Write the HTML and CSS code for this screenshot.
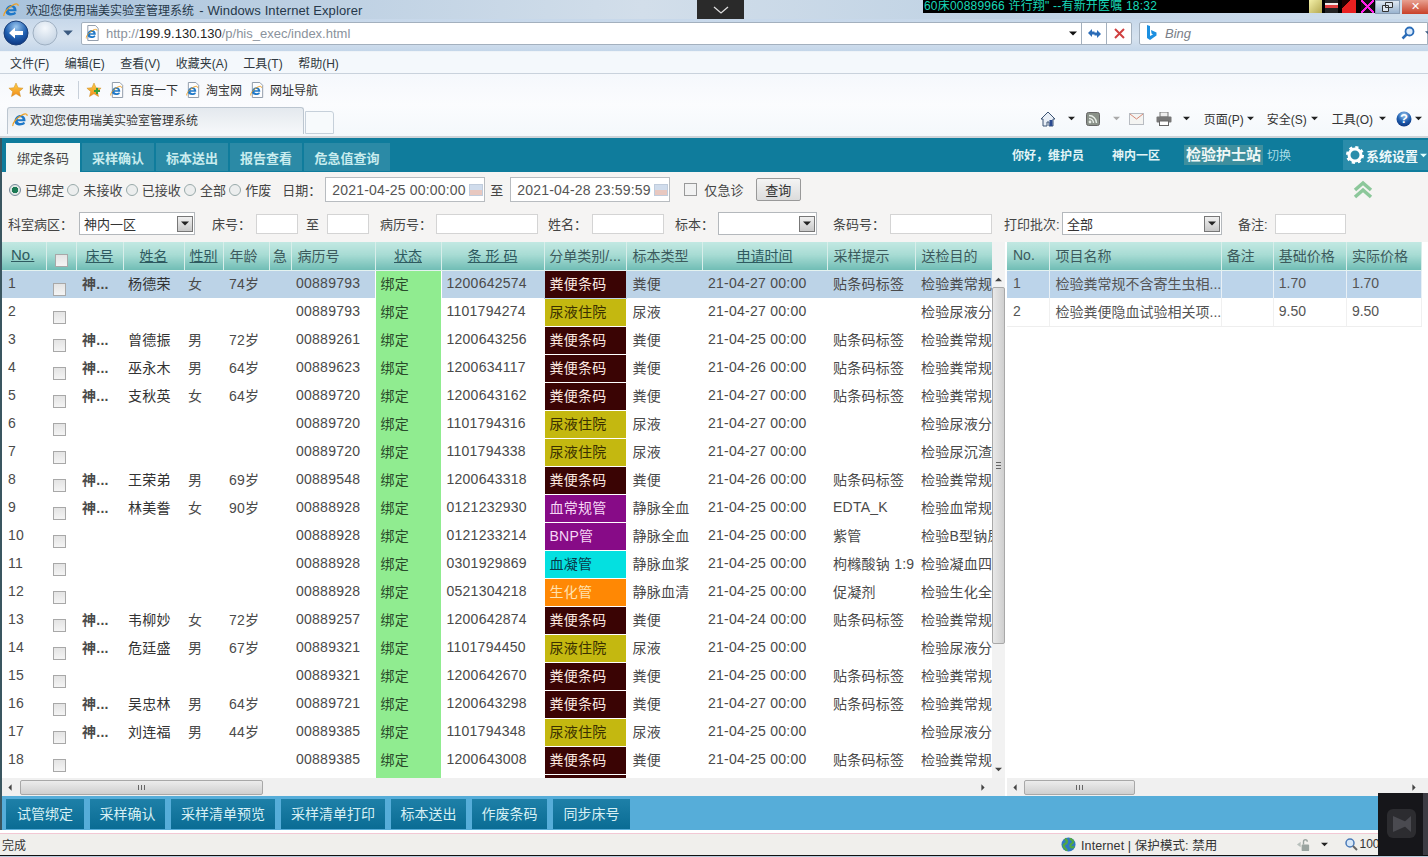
FILE: index.html
```html
<!DOCTYPE html>
<html lang="zh-CN">
<head>
<meta charset="utf-8">
<title>欢迎您使用瑞美实验室管理系统</title>
<link rel="stylesheet" href="styles.css">
</head>
<body>
<svg class="defs" width="0" height="0" aria-hidden="true">
  <defs>
    <linearGradient id="orange" x1="0" y1="0" x2="0" y2="1"><stop offset="0" stop-color="#ffd24a"/><stop offset="1" stop-color="#f08a18"/></linearGradient>
    <radialGradient id="blueball" cx=".5" cy=".25" r=".8"><stop offset="0" stop-color="#9cc8f0"/><stop offset=".55" stop-color="#1f5fb0"/><stop offset="1" stop-color="#0b2f78"/></radialGradient>
    <radialGradient id="paleball" cx=".5" cy=".3" r=".8"><stop offset="0" stop-color="#f4f8fc"/><stop offset="1" stop-color="#bccddf"/></radialGradient>
    <symbol id="ie" viewBox="0 0 16 16">
      <path d="M2.500 9.500c0-4 3-6.500 6-6.500s5.200 2.300 5 6.200H5.800c.2 2 3.800 2.600 6.200.6l1 2c-3 2.600-10.500 2.300-10.500-2.300zM5.800 7.200h4.700c-.2-2.500-4.300-2.500-4.700 0z" fill="#1f78c8"/>
      <path d="M1 14c-1-2 3-8 9-11 3-1.500 5.500-1.500 5 .8" fill="none" stroke="#f0a020" stroke-width="1.200"/>
    </symbol>
    <symbol id="page" viewBox="0 0 16 17">
      <path d="M2.500.5h8l3 3v13h-11z" fill="#fdfdfe" stroke="#8c98a6"/>
      <use href="#ie" x="0" y="3" width="13" height="13"/>
    </symbol>
    <symbol id="star" viewBox="0 0 16 16">
      <path d="M8 1l2.100 4.700 5 .5-3.800 3.300 1.200 5L8 11.800 3.500 14.500l1.200-5L.9 6.200l5-.5z" fill="url(#orange)" stroke="#c98a20" stroke-width=".5"/>
    </symbol>
    <symbol id="caret" viewBox="0 0 8 5"><path d="M0 .5h8L4 4.500z" fill="currentColor"/></symbol>
  </defs>
</svg>

<div class="window">
  <div class="titlebar">
    <svg class="ico16"><use href="#ie"/></svg>
    <span class="title-text">欢迎您使用瑞美实验室管理系统 <span class="title-latin">- Windows Internet Explorer</span></span>
  </div>

  <div class="addressrow">
    <svg class="nav-btn back" viewBox="0 0 26 26">
      <circle cx="13" cy="13" r="12" fill="url(#blueball)" stroke="#1b3f78"/>
      <path d="M6 13l6-5.500V11h8v4h-8v3.500z" fill="#fff"/>
    </svg>
    <svg class="nav-btn fwd" viewBox="0 0 26 26">
      <circle cx="13" cy="13" r="12" fill="url(#paleball)" stroke="#9fb0c2"/>
    </svg>
    <svg class="nav-caret"><use href="#caret"/></svg>
    <div class="addressbox">
      <svg class="ico16"><use href="#page"/></svg>
      <span class="url">http://<b>199.9.130.130</b>/p/his_exec/index.html</span>
      <svg class="box-caret"><use href="#caret"/></svg>
      <span class="box-btn">
        <svg width="15" height="13" viewBox="0 0 15 13"><path d="M1 6l4-4v2.500h2.500v3H5V10zM14 7l-4 4V8.500H7.500v-3H10V3z" fill="#2a6cb8"/></svg>
      </span>
      <span class="box-btn">
        <svg width="11" height="11" viewBox="0 0 11 11"><path d="M1 1l9 9M10 1l-9 9" stroke="#d04040" stroke-width="2"/></svg>
      </span>
    </div>
    <div class="searchbox">
      <svg class="bing" viewBox="0 0 11 16"><path d="M1 0l3 1v10l3-1.500-1.500-1L5 5l5.500 2.500v3L4 15l-3-2z" fill="#1c8fe0"/></svg>
      <span class="bing-text">Bing</span>
      <svg class="search-ico" viewBox="0 0 14 14"><circle cx="8.500" cy="5.500" r="4" fill="#dbeafa" stroke="#2a6cb8" stroke-width="1.800"/><path d="M5.500 8.500L1.500 12.500" stroke="#2a6cb8" stroke-width="2.500"/></svg>
      <svg class="nav-caret search-caret"><use href="#caret"/></svg>
    </div>
  </div>

  <div class="menurow">
    <span>文件(F)</span><span>编辑(E)</span><span>查看(V)</span><span>收藏夹(A)</span><span>工具(T)</span><span>帮助(H)</span>
  </div>

  <div class="favrow">
    <svg class="ico16 fav-star"><use href="#star"/></svg>
    <span class="fav-label">收藏夹</span>
    <span class="fav-sep"></span>
    <svg class="ico16 fav-add" viewBox="0 0 16 16"><use href="#star"/><path d="M8 9l6 0M11 6v6" stroke="#3aa03a" stroke-width="2"/></svg>
    <svg class="ico16 fav-page"><use href="#page"/></svg><span class="fav-link">百度一下</span>
    <svg class="ico16 fav-page"><use href="#page"/></svg><span class="fav-link">淘宝网</span>
    <svg class="ico16 fav-page"><use href="#page"/></svg><span class="fav-link">网址导航</span>
  </div>

  <div class="tabrow">
    <div class="ie-tab"><svg class="ico16"><use href="#ie"/></svg><span>欢迎您使用瑞美实验室管理系统</span></div>
    <div class="ie-newtab"></div>
    <div class="command">
      <svg class="cmd-ico home" viewBox="0 0 16 16"><path d="M8 1L1 8h2v7h4v-4h2v4h4V8h2z" fill="#e8eef6" stroke="#3c5474"/><rect x="9.500" y="9" width="3" height="6" fill="#2a4a90"/></svg>
      <svg class="cc c1"><use href="#caret"/></svg>
      <svg class="cmd-ico rss" viewBox="0 0 14 14"><rect x=".5" y=".5" width="13" height="13" rx="2" fill="#8a9188" stroke="#666"/><circle cx="4" cy="10" r="1.400" fill="#e8eee8"/><path d="M3 6.500a4.500 4.500 0 0 1 4.500 4.500M3 3.500A7.500 7.500 0 0 1 10.500 11" fill="none" stroke="#e8eee8" stroke-width="1.400"/></svg>
      <svg class="cc faded"><use href="#caret"/></svg>
      <svg class="cmd-ico mail" viewBox="0 0 15 12"><rect x=".5" y=".5" width="14" height="11" fill="#f4f4f2" stroke="#b8bcc2"/><path d="M1 1l6.500 5L14 1" fill="none" stroke="#d88a78"/></svg>
      <svg class="cmd-ico print" viewBox="0 0 16 14"><rect x="4" y="0" width="8" height="5" fill="#eee" stroke="#777"/><rect x=".5" y="4.500" width="15" height="6" rx="1" fill="#777"/><rect x="3.500" y="9" width="9" height="4.500" fill="#fff" stroke="#666"/></svg>
      <svg class="cc c2"><use href="#caret"/></svg>
      <span class="cmd-text t1">页面(P)</span><svg class="cc c3"><use href="#caret"/></svg>
      <span class="cmd-text t2">安全(S)</span><svg class="cc c4"><use href="#caret"/></svg>
      <span class="cmd-text t3">工具(O)</span><svg class="cc c5"><use href="#caret"/></svg>
      <svg class="cmd-ico help" viewBox="0 0 16 16"><circle cx="8" cy="8" r="7.500" fill="url(#blueball)"/><text x="8" y="12" text-anchor="middle" class="help-q">?</text></svg>
      <svg class="cc c6"><use href="#caret"/></svg>
    </div>
  </div>

  <main class="app">
    <nav class="appnav">
      <a class="tab active">绑定条码</a><a class="tab">采样确认</a><a class="tab">标本送出</a><a class="tab">报告查看</a><a class="tab wide">危急值查询</a>
      <span class="nav-right hello">你好，维护员</span>
      <span class="nav-right ward">神内一区</span>
      <span class="station">检验护士站</span>
      <span class="nav-right switch">切换</span>
      <span class="settings">
        <svg class="gear" viewBox="0 0 18 18"><circle cx="9" cy="9" r="6" fill="none" stroke="#fff" stroke-width="3"/><circle cx="9" cy="9" r="7.500" fill="none" stroke="#fff" stroke-width="3" stroke-dasharray="3 2.900"/></svg>
        <span class="settings-text">系统设置</span><svg class="settings-caret"><use href="#caret"/></svg>
      </span>
    </nav>

    <div class="filters">
      <div class="filter-a">
        <span class="radio on"></span><span class="r-lab">已绑定</span>
        <span class="radio"></span><span class="r-lab">未接收</span>
        <span class="radio"></span><span class="r-lab">已接收</span>
        <span class="radio"></span><span class="r-lab">全部</span>
        <span class="radio"></span><span class="r-lab">作废</span>
        <span class="date-lab">日期：</span>
        <span class="date-input">2021-04-25 00:00:00<i class="cal"></i></span>
        <span class="date-to">至</span>
        <span class="date-input">2021-04-28 23:59:59<i class="cal"></i></span>
        <span class="square"></span><span class="r-lab urgent">仅急诊</span>
        <button class="query" type="button">查询</button>
        <svg class="collapse" viewBox="0 0 20 20"><path d="M2 10l8-7 8 7M2 17l8-7 8 7" fill="none" stroke="#8cc79a" stroke-width="3.500"/></svg>
      </div>
      <div class="filter-b">
        <label>科室病区：</label><span class="select">神内一区<i class="dd"><svg><use href="#caret"/></svg></i></span>
        <label class="pl17">床号：</label><span class="input"></span>
        <label class="center">至</label><span class="input"></span>
        <label class="pl11">病历号：</label><span class="input"></span>
        <label class="pl10">姓名：</label><span class="input"></span>
        <label class="pl11">标本：</label><span class="select"><i class="dd"><svg><use href="#caret"/></svg></i></span>
        <label class="pl16">条码号：</label><span class="input"></span>
        <label class="pl12">打印批次:</label><span class="select">全部<i class="dd"><svg><use href="#caret"/></svg></i></span>
        <label class="pl16">备注:</label><span class="input"></span>
      </div>
    </div>

    <div class="panels">
      <section class="left">
        <div class="gridwrap">
          <div class="gridclip">
            <table class="grid maingrid">
              <colgroup>
                <col class="w44"><col class="w30"><col class="w47"><col class="w61"><col class="w39"><col class="w46"><col class="w22"><col class="w84"><col class="w66"><col class="w103"><col class="w82"><col class="w76"><col class="w125"><col class="w88"><col class="w77">
              </colgroup>
              <thead>
                <tr>
                  <th class="link lft first">No.</th><th><span class="cb head"></span></th><th class="link">床号</th><th class="link">姓名</th><th class="link">性别</th><th class="lft">年龄</th><th>急</th><th class="lft">病历号</th><th class="link">状态</th><th class="link spaced">条 形 码</th><th>分单类别/...</th><th class="lft">标本类型</th><th class="link">申请时间</th><th class="lft">采样提示</th><th class="lft">送检目的</th>
                </tr>
              </thead>
              <tbody>
                <tr class="sel"><td>1</td><td><span class="cb"></span></td><td class="bed">神...</td><td class="nm">杨德荣</td><td class="sx">女</td><td>74岁</td><td></td><td>00889793</td><td class="st">绑定</td><td>1200642574</td><td class="k kf">粪便条码</td><td>粪便</td><td>21-04-27 00:00</td><td>贴条码标签</td><td>检验粪常规</td></tr>
                <tr><td>2</td><td><span class="cb"></span></td><td></td><td></td><td></td><td></td><td></td><td>00889793</td><td class="st">绑定</td><td>1101794274</td><td class="k ku">尿液住院</td><td>尿液</td><td>21-04-27 00:00</td><td></td><td>检验尿液分</td></tr>
                <tr><td>3</td><td><span class="cb"></span></td><td class="bed">神...</td><td class="nm">曾德振</td><td class="sx">男</td><td>72岁</td><td></td><td>00889261</td><td class="st">绑定</td><td>1200643256</td><td class="k kf">粪便条码</td><td>粪便</td><td>21-04-25 00:00</td><td>贴条码标签</td><td>检验粪常规</td></tr>
                <tr><td>4</td><td><span class="cb"></span></td><td class="bed">神...</td><td class="nm">巫永木</td><td class="sx">男</td><td>64岁</td><td></td><td>00889623</td><td class="st">绑定</td><td>1200634117</td><td class="k kf">粪便条码</td><td>粪便</td><td>21-04-26 00:00</td><td>贴条码标签</td><td>检验粪常规</td></tr>
                <tr><td>5</td><td><span class="cb"></span></td><td class="bed">神...</td><td class="nm">支秋英</td><td class="sx">女</td><td>64岁</td><td></td><td>00889720</td><td class="st">绑定</td><td>1200643162</td><td class="k kf">粪便条码</td><td>粪便</td><td>21-04-27 00:00</td><td>贴条码标签</td><td>检验粪常规</td></tr>
                <tr><td>6</td><td><span class="cb"></span></td><td></td><td></td><td></td><td></td><td></td><td>00889720</td><td class="st">绑定</td><td>1101794316</td><td class="k ku">尿液住院</td><td>尿液</td><td>21-04-27 00:00</td><td></td><td>检验尿液分</td></tr>
                <tr><td>7</td><td><span class="cb"></span></td><td></td><td></td><td></td><td></td><td></td><td>00889720</td><td class="st">绑定</td><td>1101794338</td><td class="k ku">尿液住院</td><td>尿液</td><td>21-04-27 00:00</td><td></td><td>检验尿沉渣</td></tr>
                <tr><td>8</td><td><span class="cb"></span></td><td class="bed">神...</td><td class="nm">王荣弟</td><td class="sx">男</td><td>69岁</td><td></td><td>00889548</td><td class="st">绑定</td><td>1200643318</td><td class="k kf">粪便条码</td><td>粪便</td><td>21-04-26 00:00</td><td>贴条码标签</td><td>检验粪常规</td></tr>
                <tr><td>9</td><td><span class="cb"></span></td><td class="bed">神...</td><td class="nm">林美誊</td><td class="sx">女</td><td>90岁</td><td></td><td>00888928</td><td class="st">绑定</td><td>0121232930</td><td class="k kp">血常规管</td><td>静脉全血</td><td>21-04-25 00:00</td><td>EDTA_K</td><td>检验血常规</td></tr>
                <tr><td>10</td><td><span class="cb"></span></td><td></td><td></td><td></td><td></td><td></td><td>00888928</td><td class="st">绑定</td><td>0121233214</td><td class="k kp">BNP管</td><td>静脉全血</td><td>21-04-25 00:00</td><td>紫管</td><td>检验B型钠尿</td></tr>
                <tr><td>11</td><td><span class="cb"></span></td><td></td><td></td><td></td><td></td><td></td><td>00888928</td><td class="st">绑定</td><td>0301929869</td><td class="k kc">血凝管</td><td>静脉血浆</td><td>21-04-25 00:00</td><td>枸橼酸钠 1:9</td><td>检验凝血四</td></tr>
                <tr><td>12</td><td><span class="cb"></span></td><td></td><td></td><td></td><td></td><td></td><td>00888928</td><td class="st">绑定</td><td>0521304218</td><td class="k ko">生化管</td><td>静脉血清</td><td>21-04-25 00:00</td><td>促凝剂</td><td>检验生化全</td></tr>
                <tr><td>13</td><td><span class="cb"></span></td><td class="bed">神...</td><td class="nm">韦柳妙</td><td class="sx">女</td><td>72岁</td><td></td><td>00889257</td><td class="st">绑定</td><td>1200642874</td><td class="k kf">粪便条码</td><td>粪便</td><td>21-04-24 00:00</td><td>贴条码标签</td><td>检验粪常规</td></tr>
                <tr><td>14</td><td><span class="cb"></span></td><td class="bed">神...</td><td class="nm">危廷盛</td><td class="sx">男</td><td>67岁</td><td></td><td>00889321</td><td class="st">绑定</td><td>1101794450</td><td class="k ku">尿液住院</td><td>尿液</td><td>21-04-25 00:00</td><td></td><td>检验尿液分</td></tr>
                <tr><td>15</td><td><span class="cb"></span></td><td></td><td></td><td></td><td></td><td></td><td>00889321</td><td class="st">绑定</td><td>1200642670</td><td class="k kf">粪便条码</td><td>粪便</td><td>21-04-25 00:00</td><td>贴条码标签</td><td>检验粪常规</td></tr>
                <tr><td>16</td><td><span class="cb"></span></td><td class="bed">神...</td><td class="nm">吴忠林</td><td class="sx">男</td><td>64岁</td><td></td><td>00889721</td><td class="st">绑定</td><td>1200643298</td><td class="k kf">粪便条码</td><td>粪便</td><td>21-04-27 00:00</td><td>贴条码标签</td><td>检验粪常规</td></tr>
                <tr><td>17</td><td><span class="cb"></span></td><td class="bed">神...</td><td class="nm">刘连福</td><td class="sx">男</td><td>44岁</td><td></td><td>00889385</td><td class="st">绑定</td><td>1101794348</td><td class="k ku">尿液住院</td><td>尿液</td><td>21-04-25 00:00</td><td></td><td>检验尿液分</td></tr>
                <tr><td>18</td><td><span class="cb"></span></td><td></td><td></td><td></td><td></td><td></td><td>00889385</td><td class="st">绑定</td><td>1200643008</td><td class="k kf">粪便条码</td><td>粪便</td><td>21-04-25 00:00</td><td>贴条码标签</td><td>检验粪常规</td></tr>
                <tr><td></td><td></td><td></td><td></td><td></td><td></td><td></td><td></td><td class="st"></td><td></td><td class="k kf"></td><td></td><td></td><td></td><td></td></tr>
              </tbody>
            </table>
          </div>
          <div class="vscroll">
            <svg class="arr" viewBox="0 0 8 5"><path d="M0 4.500h8L4 .5z" fill="#444"/></svg>
            <div class="vthumb"><span class="grip-h"></span></div>
            <svg class="arr vdown" viewBox="0 0 8 5"><path d="M0 .5h8L4 4.500z" fill="#444"/></svg>
          </div>
        </div>
        <div class="hscroll">
          <svg class="arr-h" viewBox="0 0 5 8"><path d="M4.500 0v8L.5 4z" fill="#444"/></svg>
          <div class="hthumb lt"><span class="grip-v"></span></div>
          <svg class="arr-h h-end" viewBox="0 0 5 8"><path d="M.5 0v8l4-4z" fill="#444"/></svg>
        </div>
      </section>

      <section class="right">
        <div class="gridclip">
          <table class="grid sidegrid">
            <colgroup><col class="r42"><col class="r172"><col class="r52"><col class="r73"><col class="r75"></colgroup>
            <thead><tr><th class="lft plain">No.</th><th class="lft plain">项目名称</th><th class="lft plain">备注</th><th class="lft plain">基础价格</th><th class="lft plain">实际价格</th></tr></thead>
            <tbody>
              <tr class="sel side"><td>1</td><td>检验粪常规不含寄生虫相...</td><td></td><td>1.70</td><td>1.70</td></tr>
              <tr class="side"><td>2</td><td>检验粪便隐血试验相关项...</td><td></td><td>9.50</td><td>9.50</td></tr>
            </tbody>
          </table>
        </div>
        <div class="hscroll rh">
          <svg class="arr-h" viewBox="0 0 5 8"><path d="M4.500 0v8L.5 4z" fill="#444"/></svg>
          <div class="hthumb rt"><span class="grip-v"></span></div>
          <svg class="arr-h h-end" viewBox="0 0 5 8"><path d="M.5 0v8l4-4z" fill="#444"/></svg>
        </div>
      </section>
    </div>

    <div class="actions">
      <button class="act" type="button">试管绑定</button>
      <button class="act" type="button">采样确认</button>
      <button class="act" type="button">采样清单预览</button>
      <button class="act" type="button">采样清单打印</button>
      <button class="act" type="button">标本送出</button>
      <button class="act" type="button">作废条码</button>
      <button class="act" type="button">同步床号</button>
    </div>
  </main>

  <footer class="status">
    <span class="done">完成</span>
    <svg class="globe" viewBox="0 0 16 16"><circle cx="8" cy="8" r="7.500" fill="#2f78c4"/><path d="M4 2c2 1 3 2 2 4S2 7 3 10s3 2 3 5M10 1c0 2 3 2 3 4s-3 2-3 4 2 3 4 1" fill="none" stroke="#52a844" stroke-width="2.400"/></svg>
    <span class="zone">Internet | 保护模式: 禁用</span>
    <svg class="lock" viewBox="0 0 16 16"><rect x="6" y="8" width="8" height="7" rx="1" fill="#9aa4a0"/><path d="M8 8V5a2 2 0 0 1 4 0" fill="none" stroke="#9aa4a0" stroke-width="1.500"/><path d="M1 8l4-3v6z" fill="#b8c0bc"/></svg>
    <svg class="cc lockcaret"><use href="#caret"/></svg>
    <svg class="zoomico" viewBox="0 0 13 13"><circle cx="5" cy="5" r="4" fill="#d8e8f8" stroke="#4a7ab8" stroke-width="1.500"/><path d="M8 8l4 4" stroke="#666" stroke-width="2"/></svg>
    <span class="zoomtext">100</span>
  </footer>
  <div class="bottomedge"></div>

  <!-- desktop overlays above the captured browser window -->
  <div class="handle"><svg width="16" height="8" viewBox="0 0 16 8"><path d="M1 1l7 6 7-6" fill="none" stroke="#ddd" stroke-width="1.300"/></svg></div>
  <div class="ticker">60床00889966 许行翔" --有新开医嘱 18:32</div>
  <div class="winbtns">
    <span class="wb wb-mail"></span><span class="wb wb-min"></span><span class="wb wb-red"></span><span class="wb wb-x"></span>
    <span class="wb wb-restore"><svg width="11" height="10" viewBox="0 0 11 10"><path d="M3.500.5h7v5h-7zM.5 3.500h6v6h-6z" fill="#dde6f0" stroke="#333"/></svg></span><span class="wb wb-close">✕</span>
  </div>
  <div class="player">
    <span class="player-logo"><svg viewBox="0 0 20 20" width="20" height="20"><path d="M1 2l18 8-18 8zM19 2v16l-9-8z" fill="#4a4a50"/></svg></span>
    <span class="player-edge"></span>
  </div>
</div>
</body>
</html>
```

FILE: styles.css
```css
* { box-sizing: border-box; }
html, body { margin: 0; padding: 0; height: 100%; overflow: hidden; }
body { font-family: "Liberation Sans", "Noto Sans CJK SC", sans-serif; font-size: 14px; color: #444; background: #fff; }
.defs { position: absolute; }
.ico16 { width: 16px; height: 16px; flex: none; display: block; }

.window { position: relative; width: 1428px; height: 857px; display: flex; flex-direction: column; overflow: hidden; }

/* IE chrome */
.titlebar { height: 19px; display: flex; align-items: center; gap: 7px; padding-left: 3px; background: linear-gradient(90deg, #a9c3dc, #d2deea 45%, #bfd2e4 70%, #cfdeec); }
.title-text { font-size: 12px; color: #26384a; }
.title-latin { font-size: 13px; letter-spacing: .1px; margin-left: 2px; }

.addressrow { height: 33px; display: flex; align-items: center; background: linear-gradient(#c7d8ea, #d6e2ef 60%, #c4d6e9); padding: 0 0 4px 3px; border-bottom: 1px solid #eef3f8; }
.nav-btn { flex: none; width: 26px; height: 26px; display: block; }
.fwd { margin-left: 3px; }
.nav-caret { width: 10px; height: 6px; color: #3b5a80; margin-left: 5px; flex: none; }
.addressbox { margin-left: 8px; width: 1051px; height: 23px; background: #fff; border: 1px solid #a3b0be; border-radius: 2px; display: flex; align-items: center; padding-left: 3px; }
.url { margin-left: 5px; font-size: 13px; color: #8a929c; white-space: nowrap; }
.url b { font-weight: 400; color: #222; }
.box-caret { width: 8px; height: 5px; color: #111; margin-left: auto; margin-right: 4px; flex: none; }
.box-btn { width: 25px; height: 21px; border-left: 1px solid #a3b0be; display: flex; align-items: center; justify-content: center; flex: none; }
.searchbox { margin-left: 7px; flex: 1; height: 23px; background: #fff; border: 1px solid #a3b0be; border-radius: 2px 0 0 2px; display: flex; align-items: center; padding-left: 6px; }
.bing { width: 11px; height: 16px; flex: none; }
.bing-text { margin-left: 8px; font-style: italic; font-size: 13px; color: #7a8088; }
.search-ico { width: 14px; height: 14px; margin-left: auto; flex: none; }
.search-caret { width: 7px; margin-left: 10px; margin-right: -5px; }

.menurow { height: 22px; display: flex; align-items: center; gap: 15.500px; padding-left: 10px; background: #f4f8fc; border-bottom: 1px solid #c9d2dc; font-size: 12px; color: #303840; }

.favrow { height: 31px; display: flex; align-items: center; padding-left: 8px; background: linear-gradient(#f5f8fc, #fbfcfe); font-size: 12px; color: #333; }
.fav-label { margin-left: 5px; }
.fav-sep { width: 1px; height: 18px; background: #c8d0da; margin-left: 13px; }
.fav-add { margin-left: 7px; }
.fav-page { margin-left: 8px; width: 15px; }
.fav-link { margin-left: 5px; }

.tabrow { height: 33px; display: flex; align-items: flex-start; padding: 2px 0 0 7px; background: linear-gradient(#fbfcfe, #f4f8fb); border-bottom: 2px solid #cdd3d8; }
.ie-tab { width: 297px; height: 27px; border: 1px solid #bcc6d0; border-bottom: none; border-radius: 3px 3px 0 0; background: linear-gradient(#e4e9ee, #f6f8fa); display: flex; align-items: center; gap: 2px; padding: 0 0 3px 4px; font-size: 12px; color: #333; }
.ie-newtab { width: 29px; height: 23px; margin: 4px 0 0 1px; border: 1px solid #c6d0da; border-radius: 0 3px 0 0; background: #f7fafc; }
.command { margin-left: auto; height: 23px; display: flex; align-items: center; font-size: 12px; color: #333; padding-right: 6px; }
.cmd-ico { flex: none; display: block; }
.home { width: 16px; height: 16px; }
.rss { width: 14px; height: 14px; margin-left: 11px; }
.mail { width: 15px; height: 12px; margin-left: 9px; }
.print { width: 16px; height: 14px; margin-left: 12px; }
.help { width: 16px; height: 16px; margin-left: 10px; }
.help-q { font-size: 13px; font-weight: 700; fill: #fff; }
.cc { width: 7px; height: 5px; color: #222; flex: none; display: block; }
.c1 { margin-left: 12px; }
.faded { color: #aaa; margin-left: 13px; }
.c2 { margin-left: 11px; }
.t1 { margin-left: 14px; }
.c3 { margin-left: 3px; }
.t2 { margin-left: 13px; }
.c4 { margin-left: 4px; }
.t3 { margin-left: 14px; }
.c5 { margin-left: 6px; }
.c6 { margin-left: 3px; }

/* App */
.app { flex: 1; min-height: 0; display: flex; flex-direction: column; border-left: 2px solid #3a5660; background: #f4f4f2; }

.appnav { height: 34px; display: flex; align-items: flex-end; padding-left: 4px; background: #0f7c9c; color: #dff2f4; flex: none; border-bottom: 1px solid #0f7c9c; }
.tab { width: 72px; height: 28px; margin-right: 2px; display: flex; align-items: center; justify-content: center; font-size: 13px; font-weight: 700; color: #c8ecee; background: #2b8aa6; }
.tab.wide { width: 86px; }
.tab.active { width: 74px; height: 29px; background: #f4f8f6; color: #444; font-weight: 400; margin-bottom: -1px; }
.nav-right { font-size: 12px; color: #e2f4f6; align-self: center; }
.hello { margin-left: auto; font-weight: 700; }
.ward { margin-left: 28px; font-weight: 700; }
.station { margin-left: 24px; align-self: center; font-size: 15px; font-weight: 700; color: #f0f8f6; background: #3f8f9e; padding: 0 2px; line-height: 20px; }
.switch { margin-left: 4px; color: #a8dce6; }
.settings { margin-left: 52px; width: 85px; height: 30px; flex: none; align-self: flex-end; background: #2a8caa; display: flex; align-items: center; padding-left: 3px; font-size: 13px; font-weight: 700; color: #eef8fa; gap: 2px; margin-bottom: 1px; }
.settings-text { white-space: nowrap; flex: none; }
.gear { width: 18px; height: 18px; flex: none; }
.settings-caret { width: 7px; height: 5px; color: #dff; flex: none; }

.filters { height: 70px; flex: none; background: #f5f4f3; font-size: 13px; color: #444; }
.filter-a { height: 36px; display: flex; align-items: center; padding: 0 0 1px 7px; }
.radio { width: 12px; height: 12px; border-radius: 50%; border: 1px solid #9aa; background: #eceeee; flex: none; margin-left: 3px; }
.radio:first-child { margin-left: 0; }
.radio.on { background: radial-gradient(circle, #1c7a55 0 3px, #dfe8e4 3.500px); border-color: #789; }
.r-lab { margin-left: 4px; letter-spacing: .1px; white-space: nowrap; }
.date-lab { margin-left: 11px; width: 43px; }
.date-input { width: 160px; height: 25px; background: #fff; border: 1px solid #b8bcc0; display: flex; align-items: center; padding-left: 6px; color: #555; font-size: 14px; letter-spacing: .18px; white-space: nowrap; }
.cal { margin-left: auto; margin-right: 1px; width: 14px; height: 12px; background: linear-gradient(#d0dcec 50%, #e8c8c0 50%); border: 1px solid #c0ccdc; }
.date-to { margin: 0 7px 0 5px; }
.square { width: 13px; height: 13px; border: 1px solid #999; background: #f2f2f2; margin-left: 14px; flex: none; }
.urgent { margin-left: 7px; }
.query { margin-left: 12px; width: 45px; height: 23px; border: 1px solid #999; border-radius: 2px; background: linear-gradient(#f4f4f4, #dcdcdc); font: inherit; color: #333; padding: 0; }
.collapse { width: 20px; height: 20px; margin-left: 552px; flex: none; }

.filter-b { height: 34px; display: grid; grid-template-columns: 71px 116px 61px 42px 29px 42px 67px 102px 54px 72px 54px 99px 73px 102px 70px 160px 53px 71px; align-items: center; padding: 0 0 3px 6px; }
.filter-b label { white-space: nowrap; }
.pl17 { padding-left: 17px; }
.pl16 { padding-left: 16px; }
.pl12 { padding-left: 12px; }
.pl11 { padding-left: 11px; }
.pl10 { padding-left: 10px; }
.center { text-align: center; }
.input { height: 20px; background: #fff; border: 1px solid #d4d4d4; }
.select { height: 23px; background: #fff; border: 1px solid #b4b8bc; display: flex; align-items: center; padding-left: 4px; color: #333; }
.dd { margin-left: auto; margin-right: 1px; width: 16px; height: 16px; border: 1px solid #777; background: linear-gradient(#f0f0f0, #c8c8c8); display: flex; align-items: center; justify-content: center; flex: none; }
.dd svg { width: 8px; height: 5px; color: #222; }

.panels { flex: none; height: 554px; display: flex; background: #f2f2f2; }
.left { width: 1003px; flex: none; display: flex; flex-direction: column; }
.gridwrap { height: 536px; display: flex; background: #f2f2f2; }
.gridclip { flex: 1; min-width: 0; overflow: hidden; background: #fff; }
.left .gridclip { flex: none; width: 990px; height: 536px; }

.grid { border-collapse: collapse; table-layout: fixed; width: 100%; font-size: 14px; letter-spacing: .25px; }
.grid th { height: 28px; padding: 0 0 2px; font-weight: 400; font-size: 14px; letter-spacing: 0; color: #3c5a5c; background: linear-gradient(#c2e8e2 0, #a8dcd4 45%, #70bdb5 100%); border-right: 1px solid #d8eeea; border-bottom: 1px solid #e4f2f0; white-space: nowrap; overflow: hidden; text-align: center; }
.grid th.lft { text-align: left; padding-left: 6px; }
.grid th.first { padding-left: 9px; font-size: 15px; }
.grid th.link { text-decoration: underline; color: #2e5a60; }
.grid th.spaced { white-space: pre; }
.grid td { height: 28px; padding: 0 0 2px 6px; white-space: nowrap; overflow: hidden; color: #4a4a4a; }
.grid tr.sel td { background: #bcd3e7; }
.maingrid td:nth-child(8), .maingrid td:nth-child(10) { padding-left: 5px; }
.w44 { width: 44px; } .w30 { width: 30px; } .w47 { width: 47px; } .w61 { width: 61px; } .w39 { width: 39px; }
.w46 { width: 46px; } .w22 { width: 22px; } .w84 { width: 84px; } .w66 { width: 66px; } .w103 { width: 103px; }
.w82 { width: 82px; } .w76 { width: 76px; } .w125 { width: 125px; } .w88 { width: 88px; } .w77 { width: 77px; }
.r42 { width: 42px; } .r172 { width: 172px; } .r52 { width: 52px; } .r73 { width: 73px; } .r75 { width: 75px; }

.cb { display: block; width: 13px; height: 13px; margin: 6px 0 -6px 1px; border: 1px solid #a8a8a8; background: linear-gradient(#e4e4e4, #f4f4f4); }
.cb.head { margin: 6px auto -6px; }
.bed { font-weight: 700; color: #444; }
.grid td.nm { color: #333; padding-left: 5px; }
.grid td.sx { padding-left: 4px; }
.grid td.st, .grid tr.sel td.st { background: #90ec90; color: #2a4a2a; padding-left: 5px; border: 1px solid #fff; border-width: 0 1px; }
.grid td.k { padding-left: 5px; border: 1px solid #fff; }
.grid tr.sel td.k { border-color: #bcd3e7; }
.grid .kf, .grid tr.sel td.kf { background: #3a0404; color: #fbe8e0; }
.grid .ku { background: #c4b810; color: #3a3000; }
.grid .kp { background: #870b87; color: #f6d8f6; }
.grid .kc { background: #04e0e0; color: #083a4a; }
.grid .ko { background: #ff8804; color: #ffe2b0; }

.sidegrid { letter-spacing: 0; }
.sidegrid td { border-right: 1px solid #f0f0f0; border-bottom: 1px solid #eee; color: #555; }
.sidegrid td:nth-child(n+3), .sidegrid th:nth-child(n+3) { padding-left: 5px; }
.sidegrid tr.sel td { background: #bcd4ea; border-right-color: #e8f0f6; border-bottom: none; }

.vscroll { width: 13px; flex: none; background: #f2f2f2; display: flex; flex-direction: column; align-items: center; margin-top: 28px; padding-top: 7px; }
.arr { width: 7px; height: 5px; display: block; flex: none; }
.vthumb { width: 13px; height: 357px; margin-top: 5px; border: 1px solid #a8a8a8; border-radius: 2px; background: linear-gradient(90deg, #e8e8e8, #cfcfcf); display: flex; align-items: center; justify-content: center; flex: none; }
.vdown { margin-top: auto; margin-bottom: 6px; }
.grip-h { width: 5px; height: 7px; background: repeating-linear-gradient(#666 0 1px, transparent 1px 3px); }

.hscroll { height: 18px; display: flex; align-items: center; background: #f0f0f0; padding-left: 6px; flex: none; }
.arr-h { width: 4px; height: 7px; display: block; flex: none; }
.hthumb { height: 15px; border: 1px solid #a8a8a8; border-radius: 2px; background: linear-gradient(#ececec, #cfcfcf); display: flex; align-items: center; justify-content: center; flex: none; margin-left: 8px; }
.hthumb.lt { width: 243px; }
.hthumb.rt { width: 111px; }
.grip-v { width: 7px; height: 5px; background: repeating-linear-gradient(90deg, #666 0 1px, transparent 1px 3px); }
.h-end { margin-left: auto; margin-right: 20px; }

.right { flex: 1; min-width: 0; display: flex; flex-direction: column; padding-left: 2px; background: #fff; }
.right .gridclip { height: 536px; flex: none; padding-right: 6px; }
.rh .h-end { margin-right: 12px; }
.rh .hthumb.rt { margin-left: 7px; }

.actions { flex: 1; min-height: 0; display: flex; gap: 6px; align-items: flex-start; padding: 3px 0 0 4px; background: #56add9; }
.act { height: 30px; padding: 0 0 2px; font: inherit; font-size: 14px; color: #d6f0f4; border: none; background: linear-gradient(#1e80a8, #0a6c94); flex: none; }
.act:nth-child(1) { width: 78px; } .act:nth-child(2) { width: 75px; } .act:nth-child(3) { width: 104px; } .act:nth-child(4) { width: 104px; }
.act:nth-child(5) { width: 75px; } .act:nth-child(6) { width: 75px; } .act:nth-child(7) { width: 77px; }

.status { height: 25px; flex: none; display: flex; align-items: center; background: #f0efec; border-top: 3px solid #fff; box-shadow: inset 0 1px #f2c8d4; font-size: 12px; color: #333; padding-left: 2px; }
.done { margin-right: 1035px; }
.globe { width: 15px; height: 15px; flex: none; }
.zone { margin-left: 5px; white-space: nowrap; font-size: 12.500px; letter-spacing: .1px; }
.lock { width: 15px; height: 15px; margin-left: 79px; flex: none; }
.lockcaret { margin-left: 10px; }
.zoomico { width: 13px; height: 13px; margin-left: 17px; flex: none; }
.zoomtext { margin-left: 1px; font-size: 12px; }
.bottomedge { height: 2px; flex: none; background: #b8cadc; border-top: 1px solid #111; }

/* overlays */
.handle { position: absolute; left: 697px; top: 0; width: 47px; height: 19px; background: #2a2a2a; display: flex; align-items: center; justify-content: center; }
.ticker { position: absolute; left: 923px; top: 0; width: 452px; height: 13px; background: #000; color: #18d8b8; font-size: 12px; line-height: 12px; padding-left: 1px; letter-spacing: .2px; white-space: nowrap; }
.winbtns { position: absolute; left: 1309px; top: 0; display: flex; align-items: flex-start; }
.wb { display: block; height: 13px; flex: none; }
.wb-mail { width: 13px; margin-right: 3px; background: linear-gradient(135deg, #f4f0a8, #b4a850); }
.wb-min { width: 13px; margin-right: 4px; background: linear-gradient(#222 25%, #f0e8e8 25% 40%, #e04040 40% 65%, #222 65%); }
.wb-red { width: 14px; margin-right: 5px; background: linear-gradient(135deg, #200 30%, #e82020 30%); }
.wb-x { width: 13px; background: linear-gradient(45deg, transparent 44%, #ff20e8 44% 56%, transparent 56%), linear-gradient(-45deg, transparent 44%, #ff20e8 44% 56%, transparent 56%), #111; }
.wb-restore { width: 25px; height: 14px; margin-left: 1px; background: linear-gradient(#dfe8f2, #9ab4d0); border: 1px solid #889cb4; display: flex; align-items: center; justify-content: center; }
.wb-close { width: 26px; height: 14px; margin-left: 2px; background: linear-gradient(#e8a090, #c84028); color: #fff; font-size: 11px; line-height: 13px; text-align: center; }
.player { position: absolute; left: 1378px; top: 793px; width: 50px; height: 62px; background: #16161a; display: flex; }
.player-logo { margin: 16px 0 0 9px; width: 29px; height: 29px; border-radius: 6px; background: #2c2c30; display: flex; align-items: center; justify-content: center; }
.player-edge { margin-left: auto; width: 5px; background: #3c3c44; }
```
